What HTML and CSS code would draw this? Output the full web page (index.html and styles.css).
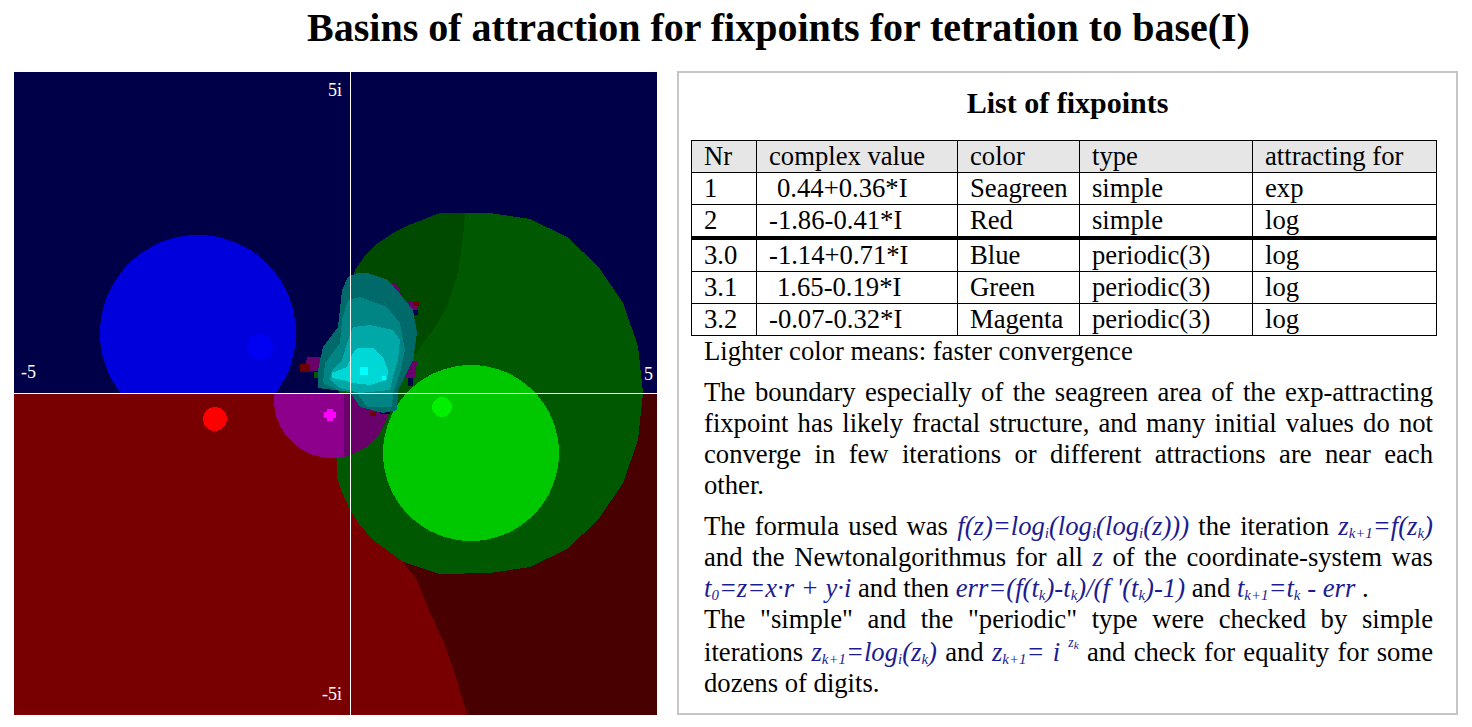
FILE: index.html
```html
<!DOCTYPE html>
<html>
<head>
<meta charset="utf-8">
<title>Basins of attraction for fixpoints for tetration to base(I)</title>
<link rel="stylesheet" href="styles.css">
</head>
<body>
<h1 class="title">Basins of attraction for fixpoints for tetration to base(I)</h1>
<div class="main">
  <div class="plot">
    <svg class="plot-svg" width="643" height="643" viewBox="0 0 643 643" xmlns="http://www.w3.org/2000/svg" shape-rendering="crispEdges">
      <defs>
        <clipPath id="clipTop"><rect x="0" y="0" width="643" height="321"/></clipPath>
        <clipPath id="clipBot"><rect x="0" y="321" width="643" height="322"/></clipPath>
        <clipPath id="clipMagR"><rect x="330" y="321" width="120" height="120"/></clipPath>
      </defs>
      <rect x="0" y="0" width="643" height="321" fill="#000048"/>
      <rect x="0" y="321" width="643" height="322" fill="#780000"/>
      <polygon fill="#480000" points="643,321 643,643 454,643 448,626 443,608 436,588 429,568 416,541 403,508 389,490 450,450 600,321"/>
      <!-- big dark green basin -->
      <polygon fill="#005800" points="426,141 476,141 516,147 553,165 584,194 609,231 624,274 629,321 624,368 609,411 584,448 553,477 516,495 476,501 426,502 389,490 359,468 345,452 336,438 328,420 323,405 322,368 324,328 328,290 331,258 335,228 341,198 350,185 361,173 379,161 395,153 413,146"/>
      <polygon fill="#004a00" points="451,141 426,141 413,146 395,153 379,161 361,173 350,185 341,198 335,228 331,258 326,288 403,281 406,275 413,266 419,258 426,247 433,235 438,220 443,205 446,188 448,171 450,156"/>
      <!-- magenta basin -->
      <g clip-path="url(#clipBot)">
        <circle cx="318" cy="328" r="58" fill="#8c008c"/>
        <circle cx="318" cy="328" r="58" fill="#6a006a" clip-path="url(#clipMagR)"/>
      </g>
      <!-- light green -->
      <circle cx="457" cy="381" r="88" fill="#00c800"/>
      <circle cx="428" cy="335" r="10" fill="#00f000"/>
      <!-- blue -->
      <g clip-path="url(#clipTop)">
        <circle cx="184" cy="261" r="98" fill="#0000dc"/>
        <circle cx="246" cy="275" r="13" fill="#0000f2"/>
      </g>
      <!-- red point -->
      <circle cx="201" cy="347" r="12" fill="#ff0000"/>
      <!-- magenta point -->
      <polygon fill="#ff00ff" points="313,337 319,337 319,340 322,340 322,346 319,346 319,349 313,349 313,346 310,346 310,340 313,340"/>
      <!-- fractal fringes -->
      <polygon fill="#6a006a" points="372,211 384,213 388,228 404,230 404,240 388,238 378,228"/>
      <rect x="392" y="238" width="12" height="5" fill="#000048"/>
      <rect x="399" y="230" width="6" height="4" fill="#6a0000"/>
      <polygon fill="#6a006a" points="293,285 311,285 311,300 291,298"/>
      <rect x="286" y="292" width="10" height="8" fill="#6a0000"/>
      <rect x="300" y="300" width="6" height="6" fill="#005800"/>
      <polygon fill="#6a006a" points="391,286 403,290 401,306 390,306"/>
      <rect x="394" y="306" width="5" height="8" fill="#000048"/>
      <rect x="366" y="337" width="10" height="5" fill="#000048"/>
      <rect x="356" y="340" width="6" height="4" fill="#6a0000"/>
      <!-- cyan layers -->
      <polygon fill="#006a6a" points="343,201 353,201 374,208 386,222 399,238 403,261 399,288 384,318 383,338 369,341 346,335 336,320 304,316 304,298 309,275 324,255 328,218 334,205"/>
      <polygon fill="#008484" points="346,225 373,235 386,251 391,278 386,301 379,321 378,335 353,335 343,321 323,318 309,311 311,291 326,271 328,248 334,228"/>
      <polygon fill="#00a8a8" points="339,255 356,253 379,258 386,268 384,288 379,305 376,318 346,321 326,316 316,308 318,298 328,288 334,268"/>
      <polygon fill="#00d8d8" points="343,276 359,276 369,285 374,298 373,308 356,313 339,311 329,308 318,306 318,301 333,295 338,283"/>
      <rect x="346" y="295" width="8" height="8" fill="#00ffff"/>
      <rect x="368" y="304" width="4" height="4" fill="#00ffff"/>
      <!-- axes -->
      <rect x="336" y="0" width="1" height="643" fill="#ffffff"/>
      <rect x="0" y="321" width="643" height="1" fill="#ffffff"/>
      <text class="axis-label" x="328" y="24" text-anchor="end">5i</text>
      <text class="axis-label" x="7" y="306">-5</text>
      <text class="axis-label" x="630" y="308">5</text>
      <text class="axis-label" x="328" y="628" text-anchor="end">-5i</text>
    </svg>
  </div>
  <div class="box">
    <h2 class="box-title">List of fixpoints</h2>
    <table class="fp">
      <colgroup>
        <col class="c-nr"><col class="c-val"><col class="c-col"><col class="c-type"><col class="c-att">
      </colgroup>
      <tr class="head"><th>Nr</th><th>complex value</th><th>color</th><th>type</th><th>attracting for</th></tr>
      <tr><td>1</td><td class="sp">0.44+0.36*I</td><td>Seagreen</td><td>simple</td><td>exp</td></tr>
      <tr class="sep"><td>2</td><td>-1.86-0.41*I</td><td>Red</td><td>simple</td><td>log</td></tr>
      <tr><td>3.0</td><td>-1.14+0.71*I</td><td>Blue</td><td>periodic(3)</td><td>log</td></tr>
      <tr><td>3.1</td><td class="sp">1.65-0.19*I</td><td>Green</td><td>periodic(3)</td><td>log</td></tr>
      <tr><td>3.2</td><td>-0.07-0.32*I</td><td>Magenta</td><td>periodic(3)</td><td>log</td></tr>
    </table>
    <p class="note">Lighter color means: faster convergence</p>
    <p class="text">The boundary especially of the seagreen area of the exp-attracting fixpoint has likely fractal structure, and many initial values do not converge in few iterations or different attractions are near each other.</p>
    <p class="text">The formula used was <span class="m">f(z)=log<sub>i</sub>(log<sub>i</sub>(log<sub>i</sub>(z)))</span> the iteration <span class="m">z<sub>k+1</sub>=f(z<sub>k</sub>)</span> and the Newtonalgorithmus for all <span class="m">z</span> of the coordinate-system was <span class="m">t<sub>0</sub>=z=x·r + y·i</span> and then <span class="m">err=(f(t<sub>k</sub>)-t<sub>k</sub>)/(f '(t<sub>k</sub>)-1)</span> and <span class="m">t<sub>k+1</sub>=t<sub>k</sub> - err</span> .<br>The "simple" and the "periodic" type were checked by simple iterations <span class="m">z<sub>k+1</sub>=log<sub>i</sub>(z<sub>k</sub>)</span> and <span class="m">z<sub>k+1</sub>= i <sup>z<sub>k</sub></sup></span> and check for equality for some dozens of digits.</p>
  </div>
</div>
</body>
</html>
```

FILE: styles.css
```css
html, body {
  margin: 0;
  padding: 0;
  background: #ffffff;
}

body {
  font-family: "Liberation Serif", "Times New Roman", Tinos, serif;
  color: #000000;
}

.title {
  margin: 5px 0 0;
  padding-left: 85px;
  font-size: 40px;
  line-height: 46px;
  font-weight: bold;
  text-align: center;
}

.main {
  display: flex;
  align-items: flex-start;
  gap: 20px;
  padding-left: 14px;
  margin-top: 20px;
}

.plot {
  flex: none;
  width: 643px;
  height: 643px;
  margin-top: 1px;
}

.plot-svg {
  display: block;
}

.axis-label {
  font-family: "Liberation Serif", "Times New Roman", serif;
  font-size: 18px;
  fill: #ffffff;
}

.box {
  flex: none;
  box-sizing: border-box;
  width: 781px;
  height: 644px;
  border: 2px solid #c6c6c6;
  font-size: 26.67px;
}

.box-title {
  margin: 13px 0 20px;
  font-size: 30px;
  line-height: 34px;
  font-weight: bold;
  text-align: center;
}

.fp {
  margin-left: 12px;
  width: 745px;
  border-collapse: collapse;
  table-layout: fixed;
  font-size: 26.67px;
}

.c-nr { width: 65px; }
.c-val { width: 201px; }
.c-col { width: 122px; }
.c-type { width: 173px; }
.c-att { width: 184px; }

.fp th,
.fp td {
  border: 1px solid #000000;
  padding: 0 0 0 12px;
  height: 31px;
  line-height: 31px;
  text-align: left;
  font-weight: normal;
  white-space: nowrap;
}

.fp .head th {
  background: #e6e6e6;
}

.fp .sep td {
  border-bottom: 4px solid #000000;
}

.fp td.sp {
  padding-left: 20px;
}

.note {
  margin: 0 23px 0 25px;
}

.text {
  margin: 10px 23px 0 25px;
  text-align: justify;
}

.m {
  font-style: italic;
  color: #1c1c90;
}

.m sub {
  font-size: 0.56em;
  line-height: 1;
  vertical-align: -3px;
}

.m sup {
  font-size: 0.52em;
  line-height: 1.15;
  vertical-align: 14px;
}

.m sup sub {
  font-size: 0.8em;
  vertical-align: -2px;
}
```
